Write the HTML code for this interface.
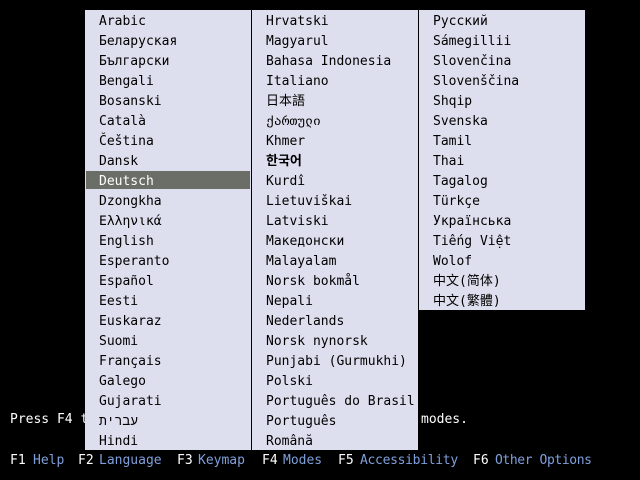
<!DOCTYPE html>
<html><head><meta charset="utf-8"><style>
*{margin:0;padding:0}
body{width:640px;height:480px;background:#000;position:relative;overflow:hidden;font-family:"DejaVu Sans Mono","Liberation Mono","Noto Sans CJK SC",monospace;font-size:13px}
.col{position:absolute;top:10px;background:#dedfee;color:#000}
.r{height:20px;line-height:23px;padding-left:14px;white-space:pre;overflow:hidden}
.sel{background:#6b6e67;color:#fff;margin:1px 1px;height:18px;line-height:21px;padding-left:13px}
.t{position:absolute;color:#fff;white-space:pre;line-height:20px;top:451px}
.b{color:#7f9fdc}
</style></head><body>
<div class="t" style="left:10px;top:410px">Press F4 to select</div>
<div class="t" style="left:421px;top:410px">modes.</div>
<div class="t" style="left:10px">F1</div><div class="t b" style="left:33px">Help</div>
<div class="t" style="left:78px">F2</div><div class="t b" style="left:99px">Language</div>
<div class="t" style="left:177px">F3</div><div class="t b" style="left:198px">Keymap</div>
<div class="t" style="left:262px">F4</div><div class="t b" style="left:283px">Modes</div>
<div class="t" style="left:338px">F5</div><div class="t b" style="left:360px;letter-spacing:-0.3px">Accessibility</div>
<div class="t" style="left:473px">F6</div><div class="t b" style="left:495px;letter-spacing:-0.4px">Other Options</div>
<div class="col" style="left:85px;width:166px;height:440px">
<div class="r">Arabic</div><div class="r">Беларуская</div><div class="r">Български</div><div class="r">Bengali</div><div class="r">Bosanski</div><div class="r">Català</div><div class="r">Čeština</div><div class="r">Dansk</div><div class="r sel">Deutsch</div><div class="r">Dzongkha</div><div class="r">Ελληνικά</div><div class="r">English</div><div class="r">Esperanto</div><div class="r">Español</div><div class="r">Eesti</div><div class="r">Euskaraz</div><div class="r">Suomi</div><div class="r">Français</div><div class="r">Galego</div><div class="r">Gujarati</div><div class="r">עברית</div><div class="r">Hindi</div>
</div>
<div class="col" style="left:252px;width:166px;height:440px">
<div class="r">Hrvatski</div><div class="r">Magyarul</div><div class="r">Bahasa Indonesia</div><div class="r">Italiano</div><div class="r">日本語</div><div class="r">ქართული</div><div class="r">Khmer</div><div class="r" style="font-weight:bold">한국어</div><div class="r">Kurdî</div><div class="r">Lietuviškai</div><div class="r">Latviski</div><div class="r">Македонски</div><div class="r">Malayalam</div><div class="r">Norsk bokmål</div><div class="r">Nepali</div><div class="r">Nederlands</div><div class="r">Norsk nynorsk</div><div class="r">Punjabi (Gurmukhi)</div><div class="r">Polski</div><div class="r">Português do Brasil</div><div class="r">Português</div><div class="r">Română</div>
</div>
<div class="col" style="left:419px;width:166px;height:300px">
<div class="r">Русский</div><div class="r">Sámegillii</div><div class="r">Slovenčina</div><div class="r">Slovenščina</div><div class="r">Shqip</div><div class="r">Svenska</div><div class="r">Tamil</div><div class="r">Thai</div><div class="r">Tagalog</div><div class="r">Türkçe</div><div class="r">Українська</div><div class="r">Tiếng Việt</div><div class="r">Wolof</div><div class="r">中文(简体)</div><div class="r">中文(繁體)</div>
</div>
</body></html>
